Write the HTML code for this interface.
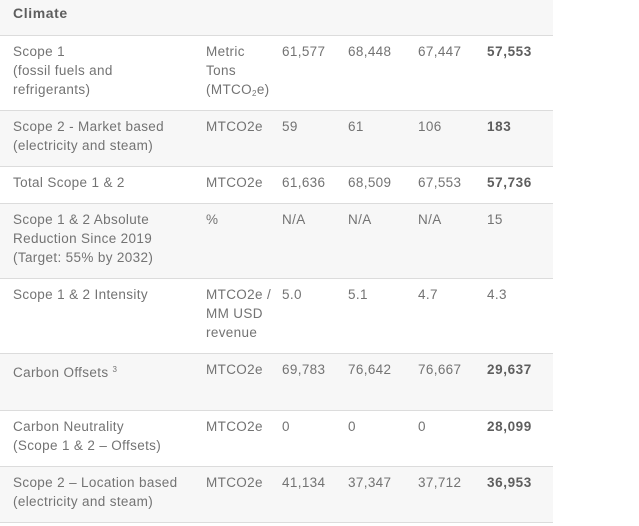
<!DOCTYPE html>
<html><head><meta charset="utf-8"><style>
body{margin:0;background:#fff;width:639px;height:526px;overflow:hidden;font-family:"Liberation Sans",sans-serif;font-size:13.5px;color:#737373;letter-spacing:0.35px}
.r{position:absolute;left:0;width:553px;border-bottom:1px solid #dcdcdc}
.g{background:#f7f7f7}
.c{position:absolute;top:6px;line-height:19px;white-space:nowrap}
.b{font-weight:bold;color:#5e5e5e;font-size:13.5px;letter-spacing:0.6px}
sub{font-size:8px;vertical-align:-2px}
sup{font-size:8px;vertical-align:5px}
</style></head><body>
<div class="r g" style="top:0;height:35px"><div class="c b" style="left:13px;top:4px;font-size:14px">Climate</div></div>
<div class="r" style="top:36px;height:74px">
<div class="c" style="left:13px">Scope 1<br>(fossil fuels and<br>refrigerants)</div>
<div class="c" style="left:206px">Metric<br>Tons<br>(MTCO<sub>2</sub>e)</div>
<div class="c" style="left:282px">61,577</div><div class="c" style="left:348px">68,448</div><div class="c" style="left:418px">67,447</div><div class="c b" style="left:487px">57,553</div></div>
<div class="r g" style="top:111px;height:55px">
<div class="c" style="left:13px">Scope 2 - Market based<br>(electricity and steam)</div>
<div class="c" style="left:206px">MTCO2e</div>
<div class="c" style="left:282px">59</div><div class="c" style="left:348px">61</div><div class="c" style="left:418px">106</div><div class="c b" style="left:487px">183</div></div>
<div class="r" style="top:167px;height:36px">
<div class="c" style="left:13px">Total Scope 1 &amp; 2</div>
<div class="c" style="left:206px">MTCO2e</div>
<div class="c" style="left:282px">61,636</div><div class="c" style="left:348px">68,509</div><div class="c" style="left:418px">67,553</div><div class="c b" style="left:487px">57,736</div></div>
<div class="r g" style="top:204px;height:74px">
<div class="c" style="left:13px">Scope 1 &amp; 2 Absolute<br>Reduction Since 2019<br>(Target: 55% by 2032)</div>
<div class="c" style="left:206px">%</div>
<div class="c" style="left:282px">N/A</div><div class="c" style="left:348px">N/A</div><div class="c" style="left:418px">N/A</div><div class="c" style="left:487px">15</div></div>
<div class="r" style="top:279px;height:74px">
<div class="c" style="left:13px">Scope 1 &amp; 2 Intensity</div>
<div class="c" style="left:206px">MTCO2e /<br>MM USD<br>revenue</div>
<div class="c" style="left:282px">5.0</div><div class="c" style="left:348px">5.1</div><div class="c" style="left:418px">4.7</div><div class="c" style="left:487px">4.3</div></div>
<div class="r g" style="top:354px;height:56px">
<div class="c" style="left:13px">Carbon Offsets <sup>3</sup></div>
<div class="c" style="left:206px">MTCO2e</div>
<div class="c" style="left:282px">69,783</div><div class="c" style="left:348px">76,642</div><div class="c" style="left:418px">76,667</div><div class="c b" style="left:487px">29,637</div></div>
<div class="r" style="top:411px;height:55px">
<div class="c" style="left:13px">Carbon Neutrality<br>(Scope 1 &amp; 2 – Offsets)</div>
<div class="c" style="left:206px">MTCO2e</div>
<div class="c" style="left:282px">0</div><div class="c" style="left:348px">0</div><div class="c" style="left:418px">0</div><div class="c b" style="left:487px">28,099</div></div>
<div class="r g" style="top:467px;height:55px">
<div class="c" style="left:13px">Scope 2 – Location based<br>(electricity and steam)</div>
<div class="c" style="left:206px">MTCO2e</div>
<div class="c" style="left:282px">41,134</div><div class="c" style="left:348px">37,347</div><div class="c" style="left:418px">37,712</div><div class="c b" style="left:487px">36,953</div></div>
</body></html>
